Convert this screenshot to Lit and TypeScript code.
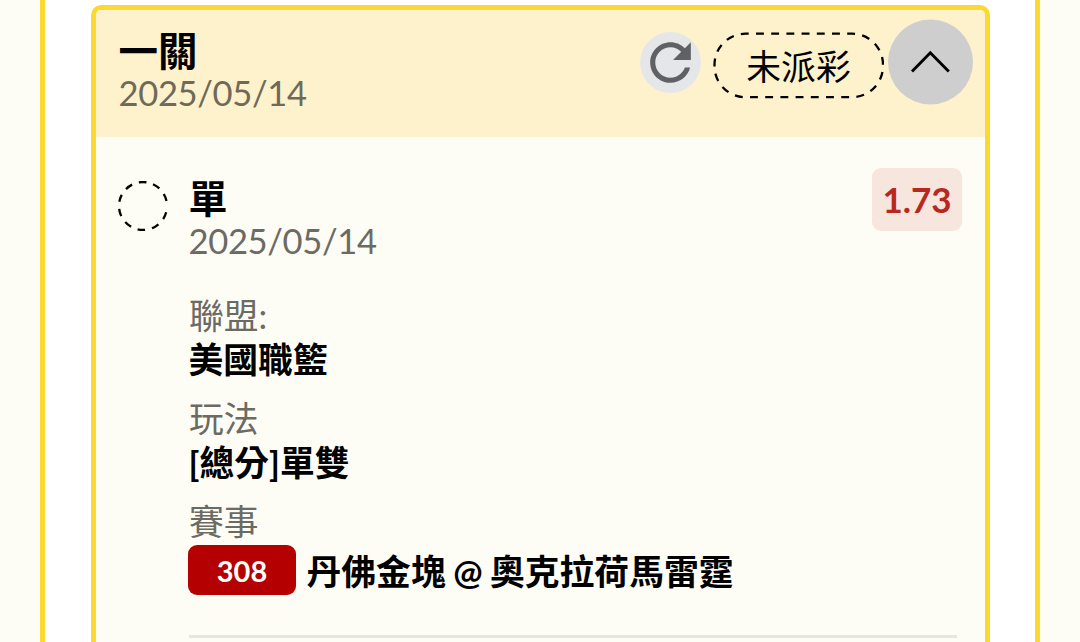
import { LitElement, html, css } from 'lit';
import { customElement, property } from 'lit/decorators.js';

interface Detail {
  label: string;
  value: string;
  code?: string;
}

@customElement('bet-leg')
export class BetLeg extends LitElement {
  @property() name = '';
  @property() date = '';
  @property() odds = '';
  @property({ attribute: false }) details: Detail[] = [];

  static styles = css`
    :host {
      display: grid;
      grid-template-columns: 50px 1fr;
      column-gap: 21px;
      padding: 31px 23px 0 22px;
    }

    .ring {
      display: block;
      width: 50px;
      height: 50px;
      margin-top: 13px;
    }

    .top {
      display: flex;
      justify-content: space-between;
      align-items: flex-start;
      height: 127px;
    }

    .name {
      font-size: 39px;
      font-weight: 700;
      line-height: 44px;
      margin-top: 8px;
    }

    .date {
      font-size: 34.6px;
      letter-spacing: -0.35px;
      line-height: 41px;
      color: #6b6a63;
    }

    .odds {
      box-sizing: border-box;
      width: 90px;
      height: 63px;
      padding-left: 1px;
      border-radius: 9px;
      background: #f7e6de;
      color: #b9281f;
      font-size: 35px;
      font-weight: 700;
      line-height: 63px;
      text-align: center;
    }

    .detail {
      height: 103px;
      font-size: 34.8px;
    }

    .label {
      padding-left: 0.5px;
      line-height: 42px;
      height: 43px;
      color: #6b6a63;
    }

    .value {
      display: flex;
      align-items: center;
      line-height: 43px;
      font-weight: 700;
      white-space: pre;
      word-spacing: -1px;
    }

    .value.coded {
      height: 50px;
      padding-top: 1px;
    }

    .match {
      padding-top: 2px;
    }

    .code {
      width: 108px;
      height: 50px;
      margin: 0 10.5px 0 -0.5px;
      border-radius: 9px;
      background: #b50000;
      color: #fff;
      font-size: 29px;
      line-height: 51px;
      text-align: center;
    }

    .rule {
      height: 3px;
      margin: 31px 5px 0 0;
      background: #e6e5df;
    }
  `;

  render() {
    return html`
      <svg class="ring" viewBox="0 0 50 50" fill="none">
        <circle cx="25" cy="25" r="24" stroke="#000" stroke-width="2.3" pathLength="360"
          transform="rotate(15 25 25)"
          stroke-dasharray="18 17 18 17 18 17 18 17 18 17 18 17 18 17 18 17 18 17 18 27" />
      </svg>
      <div>
        <div class="top">
          <div>
            <div class="name">${this.name}</div>
            <div class="date">${this.date}</div>
          </div>
          <div class="odds">${this.odds}</div>
        </div>
        ${this.details.map(
          (d) => html`
            <div class="detail">
              <div class="label">${d.label}</div>
              ${d.code
                ? html`<div class="value coded"><span class="code">${d.code}</span><span class="match">${d.value}</span></div>`
                : html`<div class="value">${d.value}</div>`}
            </div>
          `
        )}
        <div class="rule"></div>
      </div>
    `;
  }
}

@customElement('app-root')
export class AppRoot extends LitElement {
  private details: Detail[] = [
    { label: '聯盟:', value: '美國職籃' },
    { label: '玩法', value: '[總分]單雙' },
    { label: '賽事', value: '丹佛金塊 @ 奧克拉荷馬雷霆', code: '308' }
  ];

  static styles = css`
    :host {
      display: block;
      height: 642px;
      overflow: hidden;
      padding: 0 40px;
      background: #fefdf5;
      color: #000;
      font-family: Lato, 'Noto Sans CJK TC', sans-serif;
    }

    .panel {
      box-sizing: border-box;
      height: 642px;
      padding: 5px 45.5px 0;
      border: solid #fbd834;
      border-width: 0 5px;
      background: #fff;
    }

    .card {
      box-sizing: border-box;
      height: 680px;
      border: 5px solid #fbd834;
      border-radius: 10px;
      background: #fefdf5;
      overflow: hidden;
    }

    .header {
      box-sizing: border-box;
      display: flex;
      justify-content: space-between;
      align-items: flex-start;
      height: 127px;
      padding: 9px 12px 0 23px;
      background: #fef2cc;
    }

    .title {
      font-size: 39.5px;
      font-weight: 700;
      line-height: 44px;
      margin-top: 10px;
    }

    .date {
      font-size: 34.6px;
      letter-spacing: -0.35px;
      line-height: 40px;
      color: #6f6a58;
    }

    .actions {
      display: flex;
      align-items: center;
    }

    .refresh {
      width: 61px;
      height: 61px;
      margin-right: 12px;
    }

    .status {
      display: grid;
      place-items: center;
      width: 171px;
      height: 67px;
      margin: 5px 4px 0 0;
      font-size: 34.8px;
      line-height: 66px;
    }

    .status > * {
      grid-area: 1 / 1;
    }

    .status-text {
      padding: 3px 0 0 1px;
    }

    .toggle {
      width: 85px;
      height: 86px;
    }
  `;

  render() {
    return html`
      <div class="panel">
        <div class="card">
          <div class="header">
            <div>
              <div class="title">一關</div>
              <div class="date">2025/05/14</div>
            </div>
            <div class="actions">
              <svg class="refresh" viewBox="0 0 24 24">
                <circle cx="12" cy="12" r="12" fill="#e5e6e8" />
                <path fill="#5f6164" d="M17.65 6.35C16.2 4.9 14.21 4 12 4c-4.42 0-7.99 3.58-7.99 8s3.57 8 7.99 8c3.73 0 6.84-2.55 7.73-6h-2.08c-.82 2.33-3.04 4-5.65 4-3.31 0-6-2.69-6-6s2.69-6 6-6c1.66 0 3.14.69 4.22 1.78L13 11h7V4l-2.35 2.35z" />
              </svg>
              <div class="status">
                <svg width="171" height="67" fill="none">
                  <rect x="1.5" y="1.7" width="168.5" height="63.5" rx="31" stroke="#000" stroke-width="2.3"
                    pathLength="27" stroke-dasharray=".52 .48" stroke-dashoffset=".31" />
                </svg>
                <span class="status-text">未派彩</span>
              </div>
              <svg class="toggle" viewBox="0 0 85 86" fill="none">
                <circle cx="42.5" cy="43" r="42.5" fill="#cecece" />
                <path d="M24 52.5 42.3 33.8 60.8 52.5" stroke="#000" stroke-width="2.9" />
              </svg>
            </div>
          </div>
          <bet-leg name="單" date="2025/05/14" odds="1.73" .details=${this.details}></bet-leg>
        </div>
      </div>
    `;
  }
}
